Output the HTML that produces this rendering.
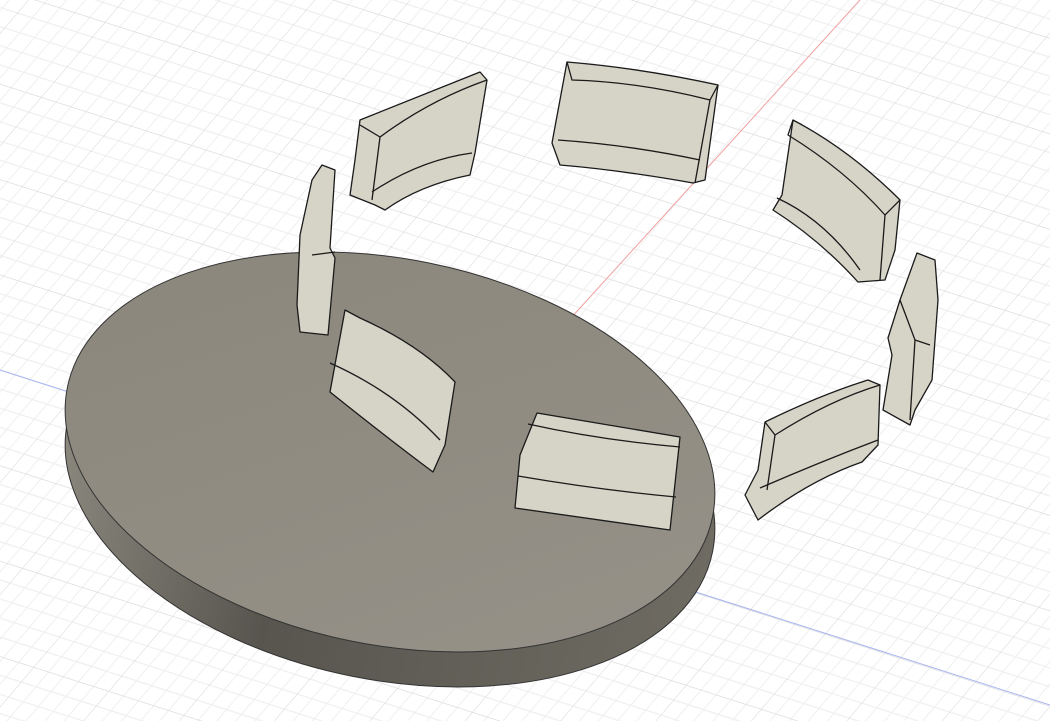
<!DOCTYPE html>
<html><head><meta charset="utf-8"><style>html,body{margin:0;padding:0;background:#fff;overflow:hidden;width:1050px;height:721px}svg{display:block}</style></head>
<body>
<svg width="1050" height="721" viewBox="0 0 1050 721" xmlns="http://www.w3.org/2000/svg">
<defs>
<pattern id="g" width="75" height="75" patternUnits="userSpaceOnUse" patternTransform="matrix(1 0.32 -0.85 1 0 370)">
<g stroke="#efefef" stroke-width="1" fill="none">
<path d="M15 0V75M30 0V75M45 0V75M60 0V75M0 15H75M0 30H75M0 45H75M0 60H75"/>
</g>
<path d="M0 0V75M0 0H75" stroke="#d4d4d4" stroke-width="1"/>
</pattern>
<linearGradient id="side" x1="0" y1="0" x2="1" y2="0">
<stop offset="0" stop-color="#8a877d"/><stop offset="0.35" stop-color="#57554e"/><stop offset="1" stop-color="#6e6b62"/>
</linearGradient>
<linearGradient id="top" x1="0" y1="0" x2="1" y2="1">
<stop offset="0" stop-color="#8a867b"/><stop offset="1" stop-color="#969289"/>
</linearGradient>
</defs>
<rect width="1050" height="721" fill="#fff"/>
<rect width="1050" height="721" fill="url(#g)"/>
<line x1="860" y1="0" x2="560" y2="330" stroke="#f0a0a0" stroke-width="1"/>
<line x1="0" y1="370" x2="1050" y2="705" stroke="#a8b4f0" stroke-width="1"/>
<!-- disc -->
<ellipse cx="390" cy="487" rx="329" ry="193" transform="rotate(11.3 390 487)" fill="url(#side)" stroke="#333" stroke-width="1"/>
<ellipse cx="390" cy="452" rx="329" ry="193" transform="rotate(11.3 390 452)" fill="url(#top)" stroke="#333" stroke-width="1"/>
<g fill="#d6d3c7" stroke="#1a1a1a" stroke-width="1.3" stroke-linejoin="round">
<!-- on disc -->
<path d="M345 310 L360 318 Q420 345 455 382 L445 445 L433 472 Q390 440 330 392 Z"/>
<path d="M330 363 Q395 392 440 440" fill="none"/>
<path d="M537 413 L680 437 L670 530 L515 508 L520 455 Z"/>
<path d="M528 424 Q600 440 680 447" fill="none"/>
<path d="M518 476 Q600 490 676 497" fill="none"/>
<!-- left small -->
<path d="M322 165 L335 170 L330 248 L335 258 L328 335 L300 332 L297 305 L300 235 L312 180 Z"/>
<path d="M312 255 L335 252" fill="none"/>
<!-- top-left -->
<path d="M360 120 L480 72 L487 80 L475 153 L470 175 Q420 185 385 210 L375 205 L350 195 L355 160 Z"/>
<path d="M360 125 L380 137 Q430 100 487 80" fill="none"/>
<path d="M380 137 L372 200" fill="none"/>
<path d="M372 192 Q420 160 472 153" fill="none"/>
<!-- top-middle -->
<path d="M567 62 Q640 68 718 85 L705 180 L693 183 Q620 170 560 165 L552 143 Z"/>
<path d="M567 62 L572 80 Q640 82 710 100 L718 85" fill="none"/>
<path d="M558 140 Q630 145 700 160" fill="none"/>
<path d="M710 100 L695 183" fill="none"/>
<!-- top-right -->
<path d="M793 120 Q850 150 900 200 L895 250 L885 280 L858 282 Q820 240 773 210 L782 195 Z"/>
<path d="M793 120 L788 135 Q845 170 885 215 L900 200" fill="none"/>
<path d="M885 215 L880 280" fill="none"/>
<path d="M777 198 Q825 220 860 270" fill="none"/>
<!-- right -->
<path d="M917 253 L935 260 L938 300 L932 380 L915 410 L910 425 L883 410 L892 355 L888 338 L900 300 Z"/>
<path d="M900 300 L915 340 L930 345" fill="none"/>
<path d="M915 340 L910 420" fill="none"/>
<!-- bottom-right -->
<path d="M765 422 Q820 395 868 380 L880 385 L878 445 L862 462 Q810 480 758 520 L745 495 L758 470 Z"/>
<path d="M765 422 L775 435 Q830 400 880 385" fill="none"/>
<path d="M775 435 L767 490" fill="none"/>
<path d="M760 488 Q820 462 878 440" fill="none"/>
</g>
</svg>
</body></html>
